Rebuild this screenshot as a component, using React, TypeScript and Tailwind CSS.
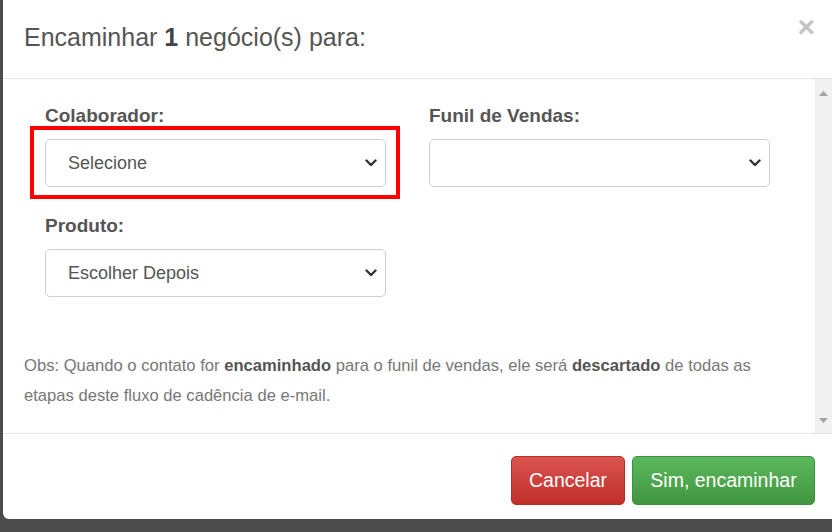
import React from 'react';

function Chevron() {
  return (
    <svg width="12" height="8" viewBox="0 0 12 8" aria-hidden="true">
      <path d="M1.5 1.5 L6 6 L10.5 1.5" fill="none" stroke="#333" strokeWidth="2.4" strokeLinecap="round" strokeLinejoin="round" />
    </svg>
  );
}

function SelectBox({ value }: { value?: string }) {
  return (
    <div className="flex h-[48px] items-center justify-between rounded-[5px] border border-[#cfcfcf] bg-white pl-[22px] pr-[8px] text-[18px] text-[#555]">
      <span>{value}</span>
      <Chevron />
    </div>
  );
}

function Field({ label, children }: { label: string; children: React.ReactNode }) {
  return (
    <div className="flex flex-col">
      <label className="mb-[12px] text-[19px] leading-[22px] font-bold text-[#555]">{label}</label>
      {children}
    </div>
  );
}

export default function App() {
  return (
    <div
      className="flex h-[532px] w-[832px] overflow-hidden bg-[#4b4b4b] pl-[3px]"
      style={{ fontFamily: '"Liberation Sans", Arial, sans-serif' }}
    >
      <div className="flex h-[519px] w-[829px] flex-col rounded-bl-[6px] bg-white">
        {/* header */}
        <div className="relative flex h-[79px] shrink-0 items-center border-b border-[#e5e5e5] pl-[21px]">
          <h4 className="pb-[2px] text-[25px] text-[#555]">
            Encaminhar <b className="text-[#444]">1</b> negócio(s) para:
          </h4>
          <span className="absolute top-[12px] right-[17px] text-[30px] leading-none font-bold text-[#c4c4c4]">×</span>
        </div>

        {/* body */}
        <div className="flex h-[355px] shrink-0 border-b border-[#e5e5e5]">
          <div className="flex-1 pt-[26px] pl-[21px]">
            <div className="grid grid-cols-[341px_341px] gap-x-[43px] gap-y-[28px] pl-[21px]">
              <Field label="Colaborador:">
                <div className="relative">
                  <SelectBox value="Selecione" />
                  <div className="pointer-events-none absolute -top-[13px] -right-[14px] -bottom-[12px] -left-[15px] border-[4px] border-[#f00]" />
                </div>
              </Field>
              <Field label="Funil de Vendas:">
                <SelectBox />
              </Field>
              <Field label="Produto:">
                <SelectBox value="Escolher Depois" />
              </Field>
            </div>
            <p className="mt-[54px] text-[16.6px] leading-[30px] text-[#777]">
              Obs: Quando o contato for <b className="text-[#555]">encaminhado</b> para o funil de vendas, ele será{' '}
              <b className="text-[#555]">descartado</b> de todas as
              <br />
              etapas deste fluxo de cadência de e-mail.
            </p>
          </div>
          {/* scrollbar */}
          <div className="flex w-[17px] flex-col items-center justify-between bg-[#f1f1f1] pt-[12px] pb-[10px]">
            <svg width="9" height="5" viewBox="0 0 9 5"><path d="M0 5 L4.5 0 L9 5 Z" fill="#a3a3a3" /></svg>
            <svg width="9" height="5" viewBox="0 0 9 5"><path d="M0 0 L4.5 5 L9 0 Z" fill="#a3a3a3" /></svg>
          </div>
        </div>

        {/* footer */}
        <div className="flex justify-end gap-[7px] pt-[22px] pr-[17px]">
          <button className="h-[49px] w-[114px] rounded-[5px] border border-[#b92c28] bg-gradient-to-b from-[#d9534f] to-[#c12e2a] text-[19.5px] text-white">
            Cancelar
          </button>
          <button className="h-[49px] w-[183px] rounded-[5px] border border-[#3e8f3e] bg-gradient-to-b from-[#5cb85c] to-[#419641] text-[19.5px] text-white">
            Sim, encaminhar
          </button>
        </div>
      </div>
    </div>
  );
}
